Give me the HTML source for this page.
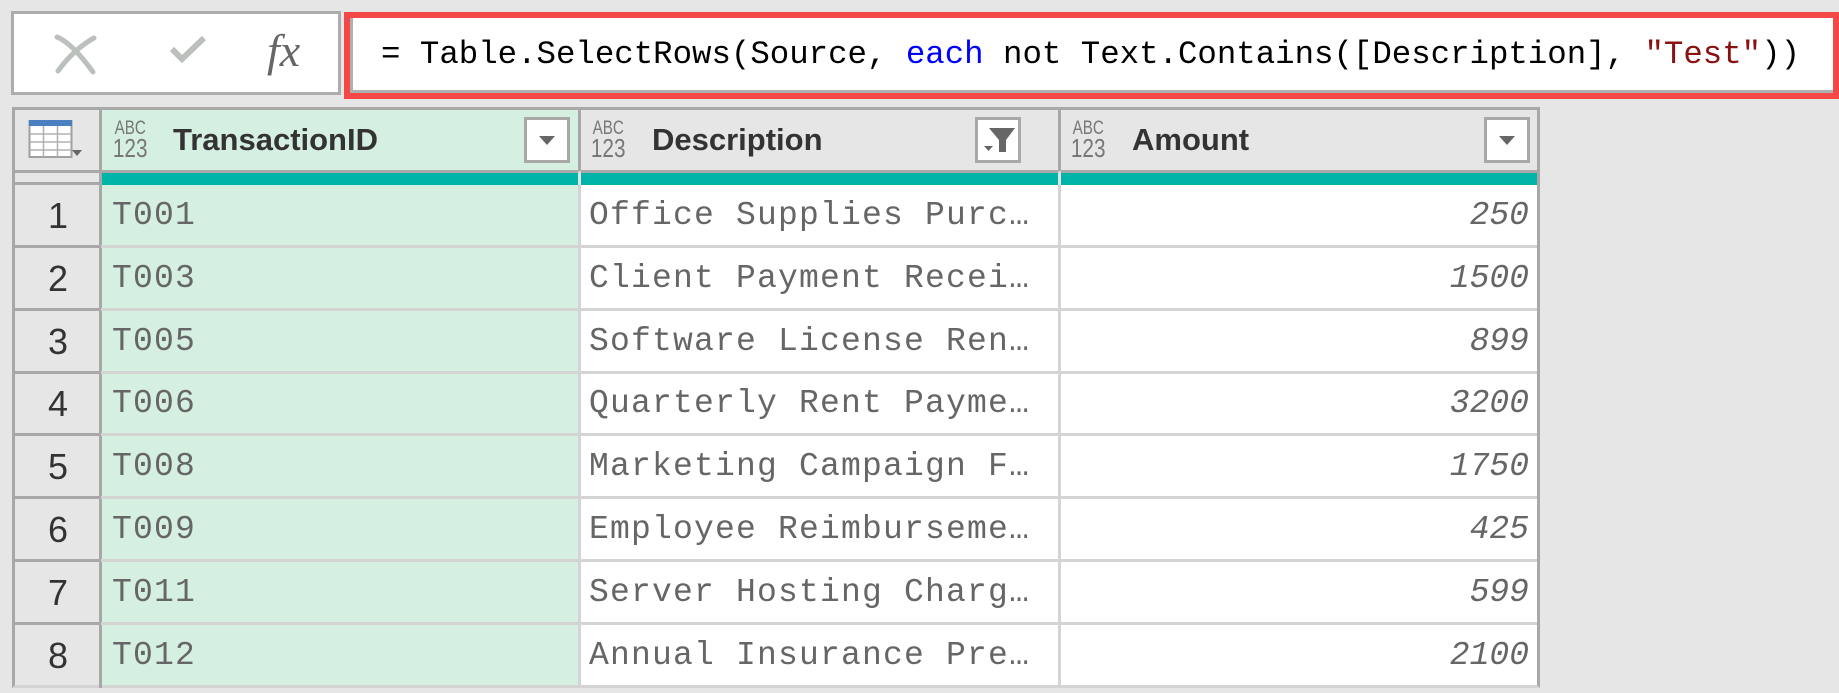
<!DOCTYPE html>
<html><head><meta charset="utf-8"><style>
*{margin:0;padding:0;box-sizing:border-box}
body{width:1839px;height:693px;background:#e6e6e6;position:relative;overflow:hidden;font-family:"Liberation Sans",sans-serif}
.abs{position:absolute}
#fxbox{left:11px;top:11px;width:330px;height:84px;background:#fff;border:3px solid #adadad}
#red{left:344px;top:12px;width:1495px;height:87px;border:6px solid #f44848;background:#fff}
#red .in{position:absolute;left:0;top:0;right:0;bottom:0;border-left:3px solid #b0b0b0;border-bottom:3px solid #b0b0b0}
#formula{left:381px;top:34px;font-family:"Liberation Mono",monospace;font-size:32.4px;color:#000;white-space:pre;line-height:42px}
#tbl{left:12px;top:107px;width:1528px;height:581px;border:3px solid #a8a8a8;border-bottom-color:#d4d4d4;background:#fff}
.cell{position:absolute;font-family:"Liberation Mono",monospace;font-size:33px;color:#666;white-space:pre;line-height:62px;letter-spacing:1.2px}
.num{position:absolute;left:15px;width:86px;text-align:center;font-size:36px;color:#333;line-height:62px}
.htext{position:absolute;top:118px;font-weight:bold;font-size:31px;color:#333;line-height:44px}
.abc{position:absolute;top:121px;width:48px;color:#777;font-size:19px;line-height:16px;text-align:center;transform:scaleX(0.8);transform-origin:left top}
.abc b{display:block;font-weight:normal;font-size:26px;line-height:22px}
.dd{position:absolute;top:117px;width:46px;height:46px;background:#fff;border:3px solid #a8a8a8}
.tri{position:absolute;left:12px;top:16px;width:0;height:0;border-left:8px solid transparent;border-right:8px solid transparent;border-top:9px solid #666}
</style></head><body>
<div id="fxbox" class="abs">
<svg class="abs" style="left:38px;top:15px" width="50" height="50" viewBox="0 0 50 50"><path d="M5 8 Q20 14 41 43 M42 9 Q22 20 6 42" stroke="#bcc0bc" stroke-width="5" fill="none" stroke-linecap="round"/></svg>
<svg class="abs" style="left:155px;top:19px" width="40" height="32" viewBox="0 0 40 32"><path d="M3 16 L13 26 L35 5" stroke="#bcc0bc" stroke-width="6" fill="none"/></svg>
<div class="abs" style="left:253px;top:12px;font-family:'Liberation Serif',serif;font-style:italic;font-size:46px;line-height:50px;color:#666">fx</div>
</div>
<div id="red" class="abs"><div class="in"></div></div>
<div id="formula" class="abs">= Table.SelectRows(Source, <span style="color:#0000ff">each</span> not Text.Contains([Description], <span style="color:#8b1010">"Test"</span>))</div>

<div id="tbl" class="abs"></div>
<div class="abs" style="left:15px;top:110px;width:85px;height:61px;background:#e6e6e6"></div>
<div class="abs" style="left:101px;top:110px;width:477px;height:61px;background:#d5efe1"></div>
<div class="abs" style="left:580px;top:110px;width:478px;height:61px;background:#e6e6e6"></div>
<div class="abs" style="left:1060px;top:110px;width:477px;height:61px;background:#e6e6e6"></div>
<div class="abs" style="left:15px;top:170px;width:1522px;height:3px;background:#a8a8a8"></div>
<div class="abs" style="left:15px;top:173px;width:85px;height:12px;background:#e6e6e6"></div>
<div class="abs" style="left:15px;top:182px;width:85px;height:3px;background:#a8a8a8"></div>
<div class="abs" style="left:101px;top:173px;width:1436px;height:12px;background:#00b5a8"></div>
<div class="abs" style="left:101px;top:185px;width:477px;height:500px;background:#d5efe1"></div>
<div class="abs" style="left:15px;top:185px;width:85px;height:500px;background:#e6e6e6"></div>
<div class="abs" style="left:99px;top:110px;width:3px;height:578px;background:#a8a8a8"></div>
<div class="abs" style="left:578px;top:110px;width:3px;height:578px;background:#d4d4d4"></div>
<div class="abs" style="left:1058px;top:110px;width:3px;height:578px;background:#d4d4d4"></div>
<div class="abs" style="left:578px;top:110px;width:3px;height:61px;background:#a8a8a8"></div>
<div class="abs" style="left:1058px;top:110px;width:3px;height:61px;background:#a8a8a8"></div>
<div class="abs" style="left:578px;top:173px;width:3px;height:12px;background:#e6e6e6"></div>
<div class="abs" style="left:1058px;top:173px;width:3px;height:12px;background:#e6e6e6"></div>

<svg class="abs" style="left:28px;top:118px" width="62" height="44" viewBox="0 0 62 44">
<rect x="1.5" y="3" width="42" height="36" fill="#fff" stroke="#a0a0a0" stroke-width="2"/>
<rect x="1" y="2" width="43" height="6" fill="#4a7fc0"/>
<path d="M15.5 8 V39 M29.5 8 V39 M2 16 H43 M2 24 H43 M2 32 H43" stroke="#b0b0b0" stroke-width="1.5"/>
<path d="M44 32 L54 32 L49 38 Z" fill="#666"/>
</svg>
<div class="abc" style="left:111px">ABC<b>123</b></div>
<div class="htext" style="left:173px">TransactionID</div>
<div class="dd" style="left:524px"><div class="tri"></div></div>
<div class="abc" style="left:589px">ABC<b>123</b></div>
<div class="htext" style="left:652px">Description</div>
<div class="dd" style="left:975px"><svg class="abs" style="left:4px;top:6px" width="34" height="30" viewBox="0 0 34 30"><path d="M7 2 H33 L24 14 V26 H17 V14 Z" fill="#666"/><path d="M2 20 H11 L6.5 25 Z" fill="#666"/></svg></div>
<div class="abc" style="left:1069px">ABC<b>123</b></div>
<div class="htext" style="left:1132px">Amount</div>
<div class="dd" style="left:1484px"><div class="tri"></div></div>

<div id="rows"></div>
<script>
var d=[["T001","Office Supplies Purc…","250"],["T003","Client Payment Recei…","1500"],["T005","Software License Ren…","899"],["T006","Quarterly Rent Payme…","3200"],["T008","Marketing Campaign F…","1750"],["T009","Employee Reimburseme…","425"],["T011","Server Hosting Charg…","599"],["T012","Annual Insurance Pre…","2100"]];
var h="";
for(var i=0;i<8;i++){var t=185+i*62.8;
h+='<div class="num" style="top:'+t+'px">'+(i+1)+'</div>';
h+='<div class="cell" style="left:112px;top:'+t+'px">'+d[i][0]+'</div>';
h+='<div class="cell" style="left:589px;top:'+t+'px">'+d[i][1]+'</div>';
h+='<div class="cell" style="right:310px;top:'+t+'px;font-style:italic;letter-spacing:0">'+d[i][2]+'</div>';
if(i<7){var b=t+60;
h+='<div class="abs" style="left:15px;top:'+b+'px;width:85px;height:3px;background:#a8a8a8"></div>';
h+='<div class="abs" style="left:101px;top:'+b+'px;width:1436px;height:3px;background:#d4d4d4"></div>';}
}
document.getElementById("rows").innerHTML=h;
</script>
</body></html>
